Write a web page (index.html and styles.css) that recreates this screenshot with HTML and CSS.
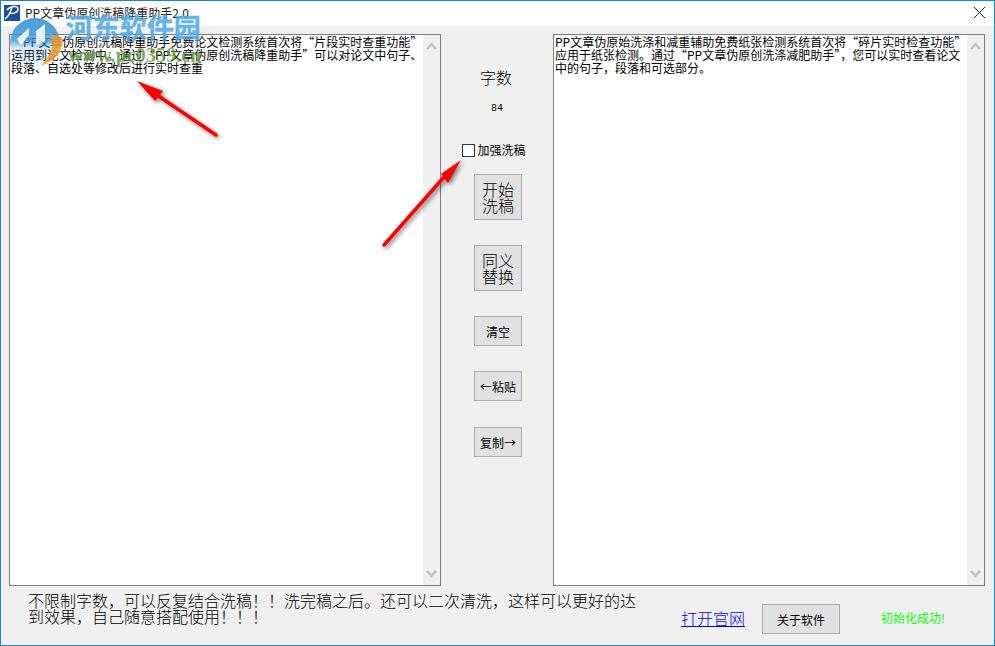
FILE: index.html
```html
<!DOCTYPE html>
<html lang="zh-CN">
<head>
  <meta charset="UTF-8" />
  <title>PP文章伪原创洗稿降重助手2.0</title>
  <link rel="stylesheet" href="styles.css">
</head>
<body>
  <div class="window">
    <!-- Title bar -->
    <div class="titlebar">
      <svg class="app-icon" width="16" height="16" viewBox="0 0 16 16">
        <rect width="16" height="16" fill="#1d4f94"/>
        <path d="M1 14C5 11 7 6 8 2M3 5C6 1 14 0 14 4C14 8 8 9 5 8" fill="none" stroke="#fff" stroke-width="1.4"/>
      </svg>
      <span class="title-text">PP文章伪原创洗稿降重助手2.0</span>
      <svg class="close-icon" width="11" height="11" viewBox="0 0 11 11">
        <path d="M0 0L11 11M11 0L0 11" stroke="#222" stroke-width="1" fill="none"/>
      </svg>
    </div>

    <div class="main">
      <!-- Source text -->
      <div class="text-panel">
        <div class="text-body"><span class="first-indent">PP文章伪原创洗稿降重助手免费论文检测系统首次将“片段实时查重功能”</span><br>运用到论文检测中。通过“PP文章伪原创洗稿降重助手”可以对论文中句子、<br>段落、自选处等修改后进行实时查重</div>
        <div class="scrollbar">
          <svg width="11" height="8" viewBox="0 0 11 8"><path d="M1 7L5.500 2L10 7" fill="none" stroke="#c4c4c4" stroke-width="2.500"/></svg>
          <svg width="11" height="8" viewBox="0 0 11 8"><path d="M1 1L5.500 6L10 1" fill="none" stroke="#c4c4c4" stroke-width="2.500"/></svg>
        </div>
      </div>

      <!-- Controls -->
      <div class="controls">
        <div class="count-label">字数</div>
        <div class="count-value">84</div>
        <label class="check-row"><span class="check-box"></span>加强洗稿</label>
        <button class="btn btn-big btn-first">开始<br>洗稿</button>
        <button class="btn btn-big">同义<br>替换</button>
        <button class="btn btn-small">清空</button>
        <button class="btn btn-small">←粘贴</button>
        <button class="btn btn-small btn-copy">复制→</button>
      </div>

      <!-- Result text -->
      <div class="text-panel">
        <div class="text-body">PP文章伪原始洗涤和减重辅助免费纸张检测系统首次将“碎片实时检查功能”<br>应用于纸张检测。通过“PP文章伪原创洗涤减肥助手”，您可以实时查看论文<br>中的句子，段落和可选部分。</div>
        <div class="scrollbar">
          <svg width="11" height="8" viewBox="0 0 11 8"><path d="M1 7L5.500 2L10 7" fill="none" stroke="#c4c4c4" stroke-width="2.500"/></svg>
          <svg width="11" height="8" viewBox="0 0 11 8"><path d="M1 1L5.500 6L10 1" fill="none" stroke="#c4c4c4" stroke-width="2.500"/></svg>
        </div>
      </div>
    </div>

    <div class="footer">
      <div class="note">不限制字数，可以反复结合洗稿！！洗完稿之后。还可以二次清洗，这样可以更好的达到效果，自己随意搭配使用！！！</div>
      <a class="site-link" href="#">打开官网</a>
      <button class="btn about-btn">关于软件</button>
      <span class="status">初始化成功!</span>
    </div>

    <!-- Watermark on top of the screenshot -->
    <svg class="wm-logo" width="58" height="58" viewBox="0 0 58 58">
      <defs>
        <linearGradient id="wmFade" x1="0" y1="0" x2="0" y2="1">
          <stop offset="0" stop-color="#3f97d6" stop-opacity="0.95"/>
          <stop offset="0.45" stop-color="#3f97d6" stop-opacity="0.8"/>
          <stop offset="0.6" stop-color="#3f97d6" stop-opacity="0.2"/>
          <stop offset="1" stop-color="#3f97d6" stop-opacity="0.1"/>
        </linearGradient>
      </defs>
      <circle cx="27" cy="28" r="25" fill="url(#wmFade)"/>
      <path d="M42 19C47 28 44 40 33 50C44 48 55 38 55 24C52 22 46 20 42 19Z" fill="#f39a2d" opacity="0.85"/>
      <path d="M9 24L21 13L21 20L13 30ZM28 16L37 9L37 26L28 30Z" fill="#fff" opacity="0.85"/>
    </svg>
    <div class="wm-name">河东软件园</div>
    <div class="wm-url">www.pc0359.cn</div>

    <!-- Red arrows -->
    <svg class="arrows" width="995" height="646" viewBox="0 0 995 646">
      <path d="M216 135L157 95" stroke="#f00" stroke-width="3.500" stroke-linecap="round" fill="none"/>
      <path d="M137 81L163 91L155 101Z" fill="#f00"/>
      <path d="M384 245L444 177" stroke="#f00" stroke-width="3.500" stroke-linecap="round" fill="none"/>
      <path d="M461 160L441 174L448 183Z" fill="#f00"/>
    </svg>
  </div>
</body>
</html>
```

FILE: styles.css
```css
* {
  box-sizing: border-box;
}

body {
  margin: 0;
  font-family: "Noto Sans CJK SC", sans-serif;
  font-size: 12px;
  color: #000;
}

.window {
  position: relative;
  width: 995px;
  height: 646px;
  background-color: #f0f0f0;
  border: 1px solid #1883d7;
  display: flex;
  flex-direction: column;
  overflow: hidden;
}

.titlebar {
  height: 25px;
  background-color: #fff;
  display: flex;
  align-items: center;
  padding: 0 9px 2px 3px;
  flex-shrink: 0;
}

.app-icon {
  margin-right: 5px;
}

.title-text {
  color: #222;
  flex: 1;
}

.main {
  display: flex;
  height: 560px;
  padding: 8px 9px 0 8px;
  flex-shrink: 0;
}

.text-panel {
  width: 432px;
  height: 552px;
  background-color: #fff;
  border: 1px solid #7f7f7f;
  display: flex;
}

.text-body {
  flex: 1;
  padding: 0 1px;
  line-height: 13px;
  white-space: nowrap;
  overflow: hidden;
}

.first-indent {
  padding-left: 12px;
}

.scrollbar {
  width: 17px;
  background-color: #f0f0f0;
  display: flex;
  flex-direction: column;
  justify-content: space-between;
  align-items: center;
  padding: 7px 0;
}

.controls {
  width: 112px;
  display: flex;
  flex-direction: column;
  align-items: center;
  padding: 33px 0 0 2px;
}

.count-label {
  margin-right: 4px;
  font-size: 16px;
  font-weight: 300;
  line-height: 20px;
}

.count-value {
  margin: 15px 0 0 -2px;
  font-family: "Liberation Mono", monospace;
  font-size: 10px;
  line-height: 14px;
}

.check-row {
  margin: 27px 8px 0 0;
  display: flex;
  align-items: center;
  line-height: 14px;
}

.check-box {
  width: 13px;
  height: 13px;
  background-color: #fff;
  border: 1px solid #333;
  margin-right: 2px;
}

.btn {
  background-color: #e1e1e1;
  border: 1px solid #adadad;
  font-family: "Noto Sans CJK SC", sans-serif;
  font-size: 12px;
  color: #000;
  padding: 0;
  border-radius: 0;
}

.btn-big {
  width: 48px;
  height: 46px;
  margin-top: 25px;
  font-size: 16px;
  font-weight: 300;
  line-height: 16px;
}

.btn-first {
  margin-top: 17px;
}

.btn-small {
  width: 48px;
  height: 30px;
  margin-top: 25px;
}

.btn-copy {
  margin-top: 26px;
}

.footer {
  flex: 1;
  display: flex;
  align-items: flex-start;
  padding-left: 27px;
}

.note {
  width: 612px;
  margin-top: 6px;
  font-size: 16px;
  font-weight: 300;
  line-height: 16px;
}

.site-link {
  margin: 23px 0 0 41px;
  font-size: 16px;
  font-weight: 300;
  line-height: 18px;
  color: #0000ff;
}

.about-btn {
  width: 78px;
  height: 30px;
  margin: 18px 0 0 17px;
}

.status {
  margin: 24px 0 0 41px;
  color: #00ff00;
  line-height: 16px;
}

.wm-logo {
  position: absolute;
  left: 7px;
  top: 14px;
}

.wm-name {
  position: absolute;
  left: 65px;
  top: 6px;
  font-size: 27px;
  font-weight: 700;
  line-height: 40px;
  color: #4ea7e6;
  opacity: 0.85;
  -webkit-text-stroke: 0.5px #4ea7e6;
}

.wm-url {
  position: absolute;
  left: 67px;
  top: 42px;
  font-family: "Liberation Serif", serif;
  font-size: 20px;
  font-weight: 700;
  letter-spacing: 0.1px;
  line-height: 24px;
  color: #5c9e3c;
  opacity: 0.8;
}

.arrows {
  position: absolute;
  left: -1px;
  top: -1px;
  pointer-events: none;
  filter: drop-shadow(2px 2px 2px rgba(0, 0, 0, 0.5));
}
```
